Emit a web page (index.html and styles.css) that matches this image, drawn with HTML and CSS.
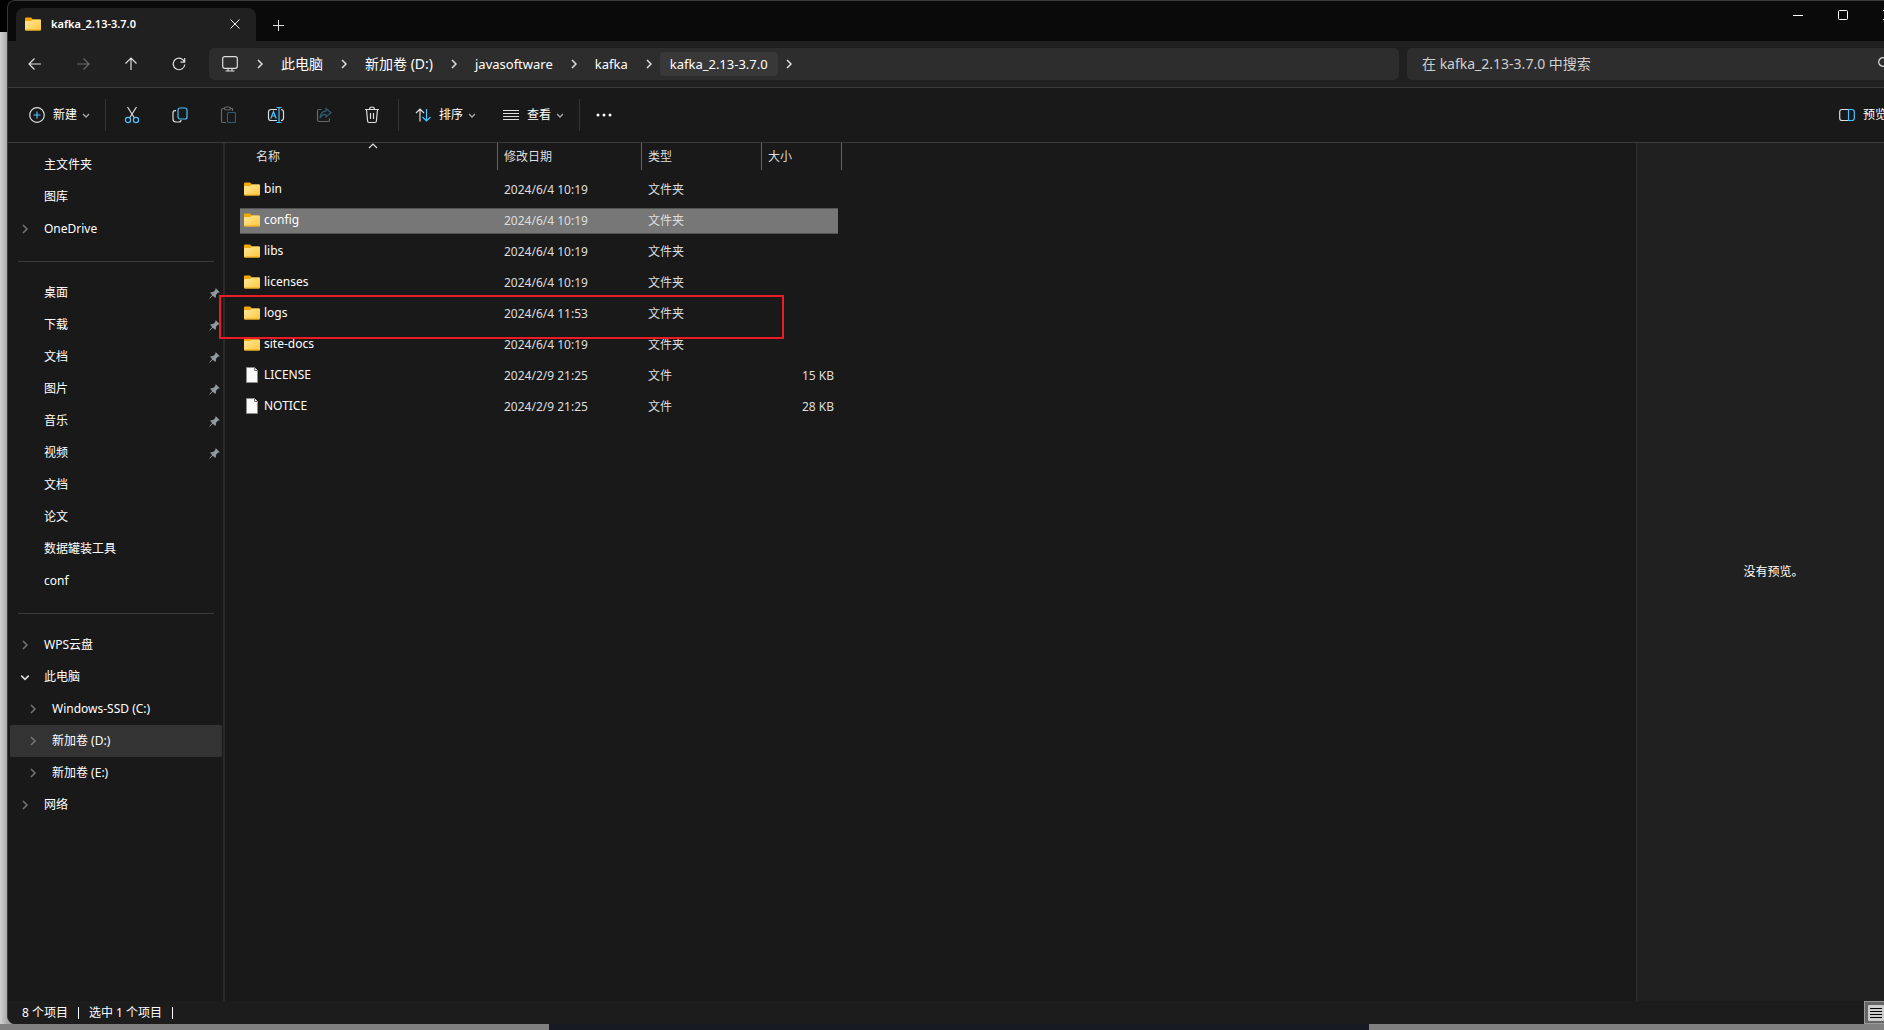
FILE: index.html
```html
<!DOCTYPE html>
<html lang="zh-CN">
<head>
<meta charset="utf-8">
<title>kafka_2.13-3.7.0</title>
<link rel="stylesheet" href="styles.css">
</head>
<body>
<svg class="defs" aria-hidden="true">
  <defs>
    <linearGradient id="folder-fill" x1="0" y1="0" x2="1" y2="1"><stop offset="0" stop-color="#ffe8a0"/><stop offset="1" stop-color="#ffc838"/></linearGradient>
    <symbol id="folder" viewBox="0 0 16 14"><path d="M0 1.500Q0 .5 1 .5H6L8 2.500H15Q16 2.500 16 3.500V6H0Z" fill="#f5a800"/><path d="M0 5Q0 4 1 4H6L8 2.500H15Q16 2.500 16 3.500V12.500Q16 13.500 15 13.500H1Q0 13.500 0 12.500Z" fill="url(#folder-fill)"/><path d="M.5 13H15.500" stroke="#e9a61a"/></symbol>
    <symbol id="file" viewBox="0 0 16 16"><path d="M2.500.5H10.500L13.500 3.500V15.500H2.500Z" fill="#fafafa" stroke="#8c8c8c"/><path d="M10.500.5V3.500H13.500" fill="#ddd" stroke="#777"/></symbol>
    <symbol id="right" viewBox="0 0 6 10"><path d="M1 1L5 5L1 9" fill="none" stroke="currentColor" stroke-width="1.500"/></symbol>
    <symbol id="down" viewBox="0 0 8 5"><path d="M1 1L4 4L7 1" fill="none" stroke="currentColor" stroke-width="1.300"/></symbol>
    <symbol id="pin" viewBox="0 0 12 12"><path d="M7.500.3L11.700 4.500L10.600 5.200L9.900 5L7.600 7.500L7.500 10L6.500 10.500L4.200 8.400L.8 11.600L.4 11.200L3.500 7.700L1.400 5.500L2 4.500L4.600 4.300L7.100 2L6.800 1.100Z" fill="#8f999f"/></symbol>
  </defs>
</svg>

<main class="window">
  <header class="titlebar">
    <div class="tab">
      <svg class="i16"><use href="#folder"/></svg>
      <span class="tab-name">kafka_2.13-3.7.0</span>
      <button class="tab-close" aria-label="关闭标签页"><svg width="10" height="10"><path d="M.5.5L9.500 9.500M9.500.5L.5 9.500" stroke="#eee"/></svg></button>
    </div>
    <button class="tab-new" aria-label="新标签页"><svg width="12" height="12"><path d="M0 6.500H11M5.500 1V12" stroke="#ddd"/></svg></button>
    <div class="caption">
      <button aria-label="最小化"><svg width="10" height="10"><path d="M0 5.500H10" stroke="#fff"/></svg></button>
      <button aria-label="最大化"><svg width="10" height="10"><rect x=".5" y=".5" width="9" height="9" rx="1" fill="none" stroke="#fff"/></svg></button>
      <button aria-label="关闭"><svg width="10" height="10"><path d="M0 0L10 10M10 0L0 10" stroke="#fff"/></svg></button>
    </div>
  </header>

  <nav class="navbar">
    <button class="nav-button" aria-label="后退"><svg width="14" height="14"><path d="M1 7H13M6.500 1.500L1 7L6.500 12.500" class="line"/></svg></button>
    <button class="nav-button" aria-label="前进" disabled><svg width="14" height="14"><path d="M1 7H13M7.500 1.500L13 7L7.500 12.500" class="line"/></svg></button>
    <button class="nav-button" aria-label="上移"><svg width="14" height="14"><path d="M7 13V1M1.500 6.500L7 1L12.500 6.500" class="line"/></svg></button>
    <button class="nav-button" aria-label="刷新"><svg width="14" height="14"><path d="M12.500 5A5.800 5.800 0 1 0 12.800 7.500M12.700 1V5.200H8.500" class="line"/></svg></button>
    <div class="address">
      <span class="monitor"><svg width="16" height="16"><rect x=".7" y=".7" width="14.600" height="11.600" rx="2" class="line"/><path d="M6 12.500V15M10 12.500V15M3.500 15H12.500" class="line"/></svg></span>
      <svg class="crumb-arrow"><use href="#right"/></svg>
      <button class="crumb">此电脑</button>
      <svg class="crumb-arrow"><use href="#right"/></svg>
      <button class="crumb">新加卷 (D:)</button>
      <svg class="crumb-arrow"><use href="#right"/></svg>
      <button class="crumb latin">javasoftware</button>
      <svg class="crumb-arrow"><use href="#right"/></svg>
      <button class="crumb latin">kafka</button>
      <svg class="crumb-arrow"><use href="#right"/></svg>
      <button class="crumb latin current">kafka_2.13-3.7.0</button>
      <svg class="crumb-arrow"><use href="#right"/></svg>
    </div>
    <div class="search">
      <input type="text" aria-label="搜索" placeholder="在 kafka_2.13-3.7.0 中搜索">
      <svg width="14" height="14"><circle cx="5" cy="5" r="4.300" class="line"/><path d="M8 8L13 13" class="line"/></svg>
    </div>
  </nav>

  <div class="toolbar">
    <button class="command first"><svg width="16" height="16"><circle cx="8" cy="8" r="7.300" class="line"/><path d="M8 4.500V11.500M4.500 8H11.500" class="blue"/></svg>新建<svg class="caret"><use href="#down"/></svg></button>
    <span class="divider"></span>
    <button class="tool" aria-label="剪切"><svg width="16" height="18"><path d="M3.500 1L10.500 12M12.500 1L5.500 12" class="line"/><circle cx="4" cy="14" r="2.600" class="blue"/><circle cx="12" cy="14" r="2.600" class="blue"/></svg></button>
    <button class="tool" aria-label="复制"><svg width="16" height="16"><path d="M4 3.700H3Q1 3.700 1 5.700V12Q1 15 4 15H7Q9 15 9 13" class="line"/><rect x="6" y="1" width="9" height="11" rx="2" class="blue"/></svg></button>
    <button class="tool" aria-label="粘贴" disabled><svg width="16" height="18"><path d="M5 2.500H3Q1.500 2.500 1.500 4V15Q1.500 16.500 3 16.500H6M11 2.500H12.500V5" class="line"/><rect x="4.500" y="1" width="6" height="3" rx="1.500" class="line"/><rect x="7.500" y="6.500" width="8" height="10" rx="1" class="blue"/></svg></button>
    <button class="tool" aria-label="重命名"><svg width="18" height="18"><path d="M10 3.500H4Q1.500 3.500 1.500 6V12Q1.500 14.500 4 14.500H10M14 3.500Q16.500 3.500 16.500 6V12Q16.500 14.500 14 14.500" class="line"/><path d="M3.800 12.500L6.500 5.500L9.200 12.500M4.800 10H8.200M12 1.500V16.500M9.500 1.500H14.500M9.500 16.500H14.500" class="blue"/></svg></button>
    <button class="tool" aria-label="共享" disabled><svg width="16" height="16"><path d="M5.500 2.500H3Q1.500 2.500 1.500 4V13Q1.500 14.500 3 14.500H12Q13.500 14.500 13.500 13V11.500" class="line"/><path d="M10 1.500L15 5.800L10 10V7.500Q6.500 7 4 11Q4.500 4.500 10 4.200Z" class="blue"/></svg></button>
    <button class="tool" aria-label="删除"><svg width="16" height="18"><path d="M1 3.500H15M5.500 3.500Q5.500 1 8 1Q10.500 1 10.500 3.500M2.500 3.500L3.600 15Q3.700 16.500 5 16.500H11Q12.300 16.500 12.400 15L13.500 3.500M6.500 7V13M9.500 7V13" class="line"/></svg></button>
    <span class="divider"></span>
    <button class="command"><svg width="16" height="16"><path d="M5 14.500V2M1 6L5 2L9 6" class="line"/><path d="M11.500 2V14M7.500 10L11.500 14L15.500 10" class="blue"/></svg>排序<svg class="caret"><use href="#down"/></svg></button>
    <button class="command"><svg width="16" height="16"><path d="M0 3.500H16M0 6.500H16M0 9.500H16M0 12.500H16" class="line crisp"/></svg>查看<svg class="caret"><use href="#down"/></svg></button>
    <span class="divider"></span>
    <button class="command more" aria-label="更多"><svg width="16" height="4" fill="#fff"><circle cx="2" cy="2" r="1.500"/><circle cx="8" cy="2" r="1.500"/><circle cx="14" cy="2" r="1.500"/></svg></button>
    <button class="command preview-toggle"><svg width="16" height="16"><path d="M9.500 2.500H3Q.7 2.500.7 5V11Q.7 13.500 3 13.500H9.500" class="line"/><path d="M9.500 2.500H13Q15.300 2.500 15.300 5V11Q15.300 13.500 13 13.500H9.500Z" class="blue"/></svg>预览</button>
  </div>

  <div class="content">
    <aside class="sidebar">
      <ul class="tree">
        <li><a href="#">主文件夹</a></li>
        <li><a href="#">图库</a></li>
        <li><a href="#"><svg class="expand"><use href="#right"/></svg>OneDrive</a></li>
      </ul>
      <hr>
      <ul class="tree">
        <li><a href="#">桌面<svg class="pin"><use href="#pin"/></svg></a></li>
        <li><a href="#">下载<svg class="pin"><use href="#pin"/></svg></a></li>
        <li><a href="#">文档<svg class="pin"><use href="#pin"/></svg></a></li>
        <li><a href="#">图片<svg class="pin"><use href="#pin"/></svg></a></li>
        <li><a href="#">音乐<svg class="pin"><use href="#pin"/></svg></a></li>
        <li><a href="#">视频<svg class="pin"><use href="#pin"/></svg></a></li>
        <li><a href="#">文档</a></li>
        <li><a href="#">论文</a></li>
        <li><a href="#">数据罐装工具</a></li>
        <li><a href="#">conf</a></li>
      </ul>
      <hr>
      <ul class="tree">
        <li><a href="#"><svg class="expand"><use href="#right"/></svg>WPS云盘</a></li>
        <li><a href="#"><svg class="expand open"><use href="#down"/></svg>此电脑</a></li>
        <li><a href="#" class="child"><svg class="expand"><use href="#right"/></svg>Windows-SSD (C:)</a></li>
        <li><a href="#" class="child active"><svg class="expand"><use href="#right"/></svg>新加卷 (D:)</a></li>
        <li><a href="#" class="child"><svg class="expand"><use href="#right"/></svg>新加卷 (E:)</a></li>
        <li><a href="#"><svg class="expand"><use href="#right"/></svg>网络</a></li>
      </ul>
    </aside>

    <section class="files">
      <table>
        <colgroup><col class="col-name"><col class="col-date"><col class="col-type"><col class="col-size"></colgroup>
        <thead>
          <tr><th><span class="head name-head">名称<svg class="sort"><path d="M1 5L5 1L9 5" class="line"/></svg></span></th><th><span class="head">修改日期</span></th><th><span class="head">类型</span></th><th><span class="head">大小</span></th></tr>
        </thead>
        <tbody>
          <tr><td><svg class="i16"><use href="#folder"/></svg>bin</td><td>2024/6/4 10:19</td><td>文件夹</td><td></td></tr>
          <tr class="selected"><td><svg class="i16"><use href="#folder"/></svg>config</td><td>2024/6/4 10:19</td><td>文件夹</td><td></td></tr>
          <tr><td><svg class="i16"><use href="#folder"/></svg>libs</td><td>2024/6/4 10:19</td><td>文件夹</td><td></td></tr>
          <tr><td><svg class="i16"><use href="#folder"/></svg>licenses</td><td>2024/6/4 10:19</td><td>文件夹</td><td></td></tr>
          <tr><td><svg class="i16"><use href="#folder"/></svg>logs</td><td>2024/6/4 11:53</td><td>文件夹</td><td></td></tr>
          <tr><td><svg class="i16"><use href="#folder"/></svg>site-docs</td><td>2024/6/4 10:19</td><td>文件夹</td><td></td></tr>
          <tr><td><svg class="i16"><use href="#file"/></svg>LICENSE</td><td>2024/2/9 21:25</td><td>文件</td><td>15 KB</td></tr>
          <tr><td><svg class="i16"><use href="#file"/></svg>NOTICE</td><td>2024/2/9 21:25</td><td>文件</td><td>28 KB</td></tr>
        </tbody>
      </table>
      <div class="marker"></div>
    </section>

    <aside class="preview">没有预览。</aside>
  </div>

  <footer class="status">
    <span class="status-item">8 个项目</span>
    <span class="status-item">选中 1 个项目</span>
    <button class="view-mode" aria-label="详细信息"><svg width="16" height="16"><rect width="16" height="16" rx="1" fill="#ccc"/><path d="M2 3.500H14M2 6.500H14M2 9.500H14M2 12.500H14" stroke="#000"/></svg></button>
  </footer>
</main>
<div class="behind"><span></span><span class="dark"></span><span></span></div>
</body>
</html>
```
FILE: styles.css
```css
* { box-sizing: border-box; }

body {
  margin: 0;
  height: 100vh;
  overflow: hidden;
  display: flex;
  flex-direction: column;
  background: linear-gradient(#000 32px, transparent 32px), linear-gradient(90deg, #d2d2d2, #a6a6a6 8px);
  color: #fff;
  font: 12px/16px "Noto Sans", "Noto Sans CJK SC", sans-serif;
}

.defs { position: absolute; width: 0; height: 0; }

button, input {
  margin: 0;
  padding: 0;
  border: 0;
  background: none;
  color: inherit;
  font: inherit;
}

svg { flex: none; display: block; }
.line { fill: none; stroke: #dedede; stroke-width: 1.2; }
.blue { fill: none; stroke: #4cc2ff; stroke-width: 1.2; }
.crisp { stroke-width: 1; }
.i16 { width: 16px; height: 16px; }
button:disabled svg { opacity: 0.4; }

/* The window runs past the right edge of the screen. */
.window {
  flex: 1;
  min-height: 0;
  margin: 0 -27px 0 7px;
  display: flex;
  flex-direction: column;
  border: 1px solid #3a3a3a;
  border-bottom: 0;
  border-radius: 8px;
  background: #191919;
  overflow: hidden;
}

.titlebar {
  height: 40px;
  display: flex;
  align-items: flex-end;
  padding-left: 8px;
  background: #0a0a0a;
}

.tab {
  width: 240px;
  height: 33px;
  display: flex;
  align-items: center;
  gap: 10px;
  padding: 0 16px 1px 9px;
  border-radius: 8px 8px 0 0;
  background: #202020;
  font-size: 11px;
  font-weight: 600;
}
.tab-name { flex: 1; }
.tab-new { height: 33px; margin-left: 17px; }
.caption { display: flex; align-self: flex-start; margin-left: auto; }
.caption button { width: 45px; height: 28px; display: grid; place-items: center; }

.navbar {
  height: 47px;
  display: flex;
  align-items: center;
  padding: 0 8px 0 3px;
  background: #202020;
  border-bottom: 1px solid #3c3c3c;
  font-size: 14px;
  line-height: 20px;
}
.nav-button, .tool { width: 48px; height: 32px; display: grid; place-items: center; }

.address {
  flex: 1;
  height: 32px;
  display: flex;
  align-items: center;
  margin: 0 8px 0 6px;
  padding-left: 13px;
  border-radius: 5px;
  background: #2d2d2d;
}
.monitor { width: 27px; }
.crumb { height: 24px; padding: 0 10px; border-radius: 4px; }
.crumb.latin { font-size: 13px; }
.crumb.current { background: #383838; }
.crumb-arrow { width: 6px; height: 10px; margin: 0 8px; color: #e0e0e0; }

.search {
  flex: 0 0 495px;
  height: 32px;
  display: flex;
  align-items: center;
  padding: 0 10px 0 15px;
  border-radius: 5px;
  background: #2d2d2d;
}
.search input { flex: 1; min-width: 0; outline: 0; }
.search input::placeholder { color: #cfcfcf; opacity: 1; }

.toolbar {
  height: 55px;
  display: flex;
  align-items: center;
  border-bottom: 1px solid #3c3c3c;
}
.command {
  height: 32px;
  display: flex;
  align-items: center;
  gap: 8px;
  padding: 0 13px 0 14px;
}
.command.first { padding-left: 21px; }
.caret { width: 8px; height: 5px; margin-left: -3px; color: #aaa; }
.divider { width: 1px; height: 32px; margin: 0 2px; background: #333; }
.preview-toggle { margin-left: auto; padding: 0 23px 0 0; }

.content { flex: 1; min-height: 0; display: flex; }

.sidebar {
  flex: none;
  width: 217px;
  padding: 6px 1px 0 2px;
  border-right: 2px solid #2a2a2a;
}
.sidebar hr {
  height: 1px;
  margin: 16px 8px 15px;
  border: 0;
  background: #3c3c3c;
}
.tree { margin: 0; padding: 0; list-style: none; }
.tree a {
  height: 32px;
  display: flex;
  align-items: center;
  padding-left: 34px;
  border-radius: 2px;
  color: #fff;
  text-decoration: none;
}
.tree .child { padding-left: 42px; }
.tree .active { background: #333; }
.expand {
  width: 6px;
  height: 10px;
  margin: 0 16px 0 -22px;
  color: #777;
}
.expand.open {
  width: 10px;
  height: 7px;
  margin: 0 14px 0 -24px;
  color: #ddd;
}
.pin { width: 11px; height: 11px; margin-left: auto; margin-right: 2px; }

.files { position: relative; flex: 1; min-width: 0; padding-left: 15px; }

table {
  width: 602px;
  table-layout: fixed;
  border-collapse: separate;
  border-spacing: 0;
}
.col-name { width: 258px; }
.col-date { width: 144px; }
.col-type { width: 120px; }
.col-size { width: 80px; }
th { height: 31px; padding: 0; vertical-align: top; font-weight: 400; text-align: left; color: #dedede; }
.head {
  height: 27px;
  display: flex;
  align-items: center;
  padding-left: 6px;
  border-right: 1px solid #636363;
}
.name-head { position: relative; padding-left: 16px; }
.sort { position: absolute; top: 0; left: 128px; width: 10px; height: 6px; }
td {
  height: 31px;
  padding: 0 0 0 6px;
  border: solid transparent;
  border-width: 3px 0 2px;
  background-clip: padding-box;
  color: #dedede;
}
td:first-child { display: flex; align-items: center; gap: 4px; padding: 0 0 2px 4px; color: #fff; }
td:last-child { padding: 0 4px 0 0; border-right-width: 4px; text-align: right; }
.selected td { background-color: #777; box-shadow: inset 0 1px #555, inset 0 -1px #555; }

.marker {
  position: absolute;
  top: 152px;
  left: -6px;
  width: 565px;
  height: 44px;
  border: 2px solid #ed1c24;
}

.preview {
  flex: none;
  width: 274px;
  display: grid;
  place-items: center;
  border-left: 1px solid #303030;
  background: #202020;
}

.status {
  height: 23px;
  display: flex;
  align-items: center;
  padding-left: 14px;
  background: #1c1c1c;
}
.status-item { padding-right: 10px; margin-right: 10px; border-right: 1px solid #fff; line-height: 12px; }
.view-mode {
  width: 46px;
  height: 23px;
  margin-left: auto;
  padding-left: 3px;
  border: 1px solid #999;
  background: #666;
}

.behind { height: 6px; display: flex; }
.behind span { flex: 549; background: #808080; }
.behind .dark { flex: 820; background: #171a22; }
.behind span:last-child { flex: 515; }
```
